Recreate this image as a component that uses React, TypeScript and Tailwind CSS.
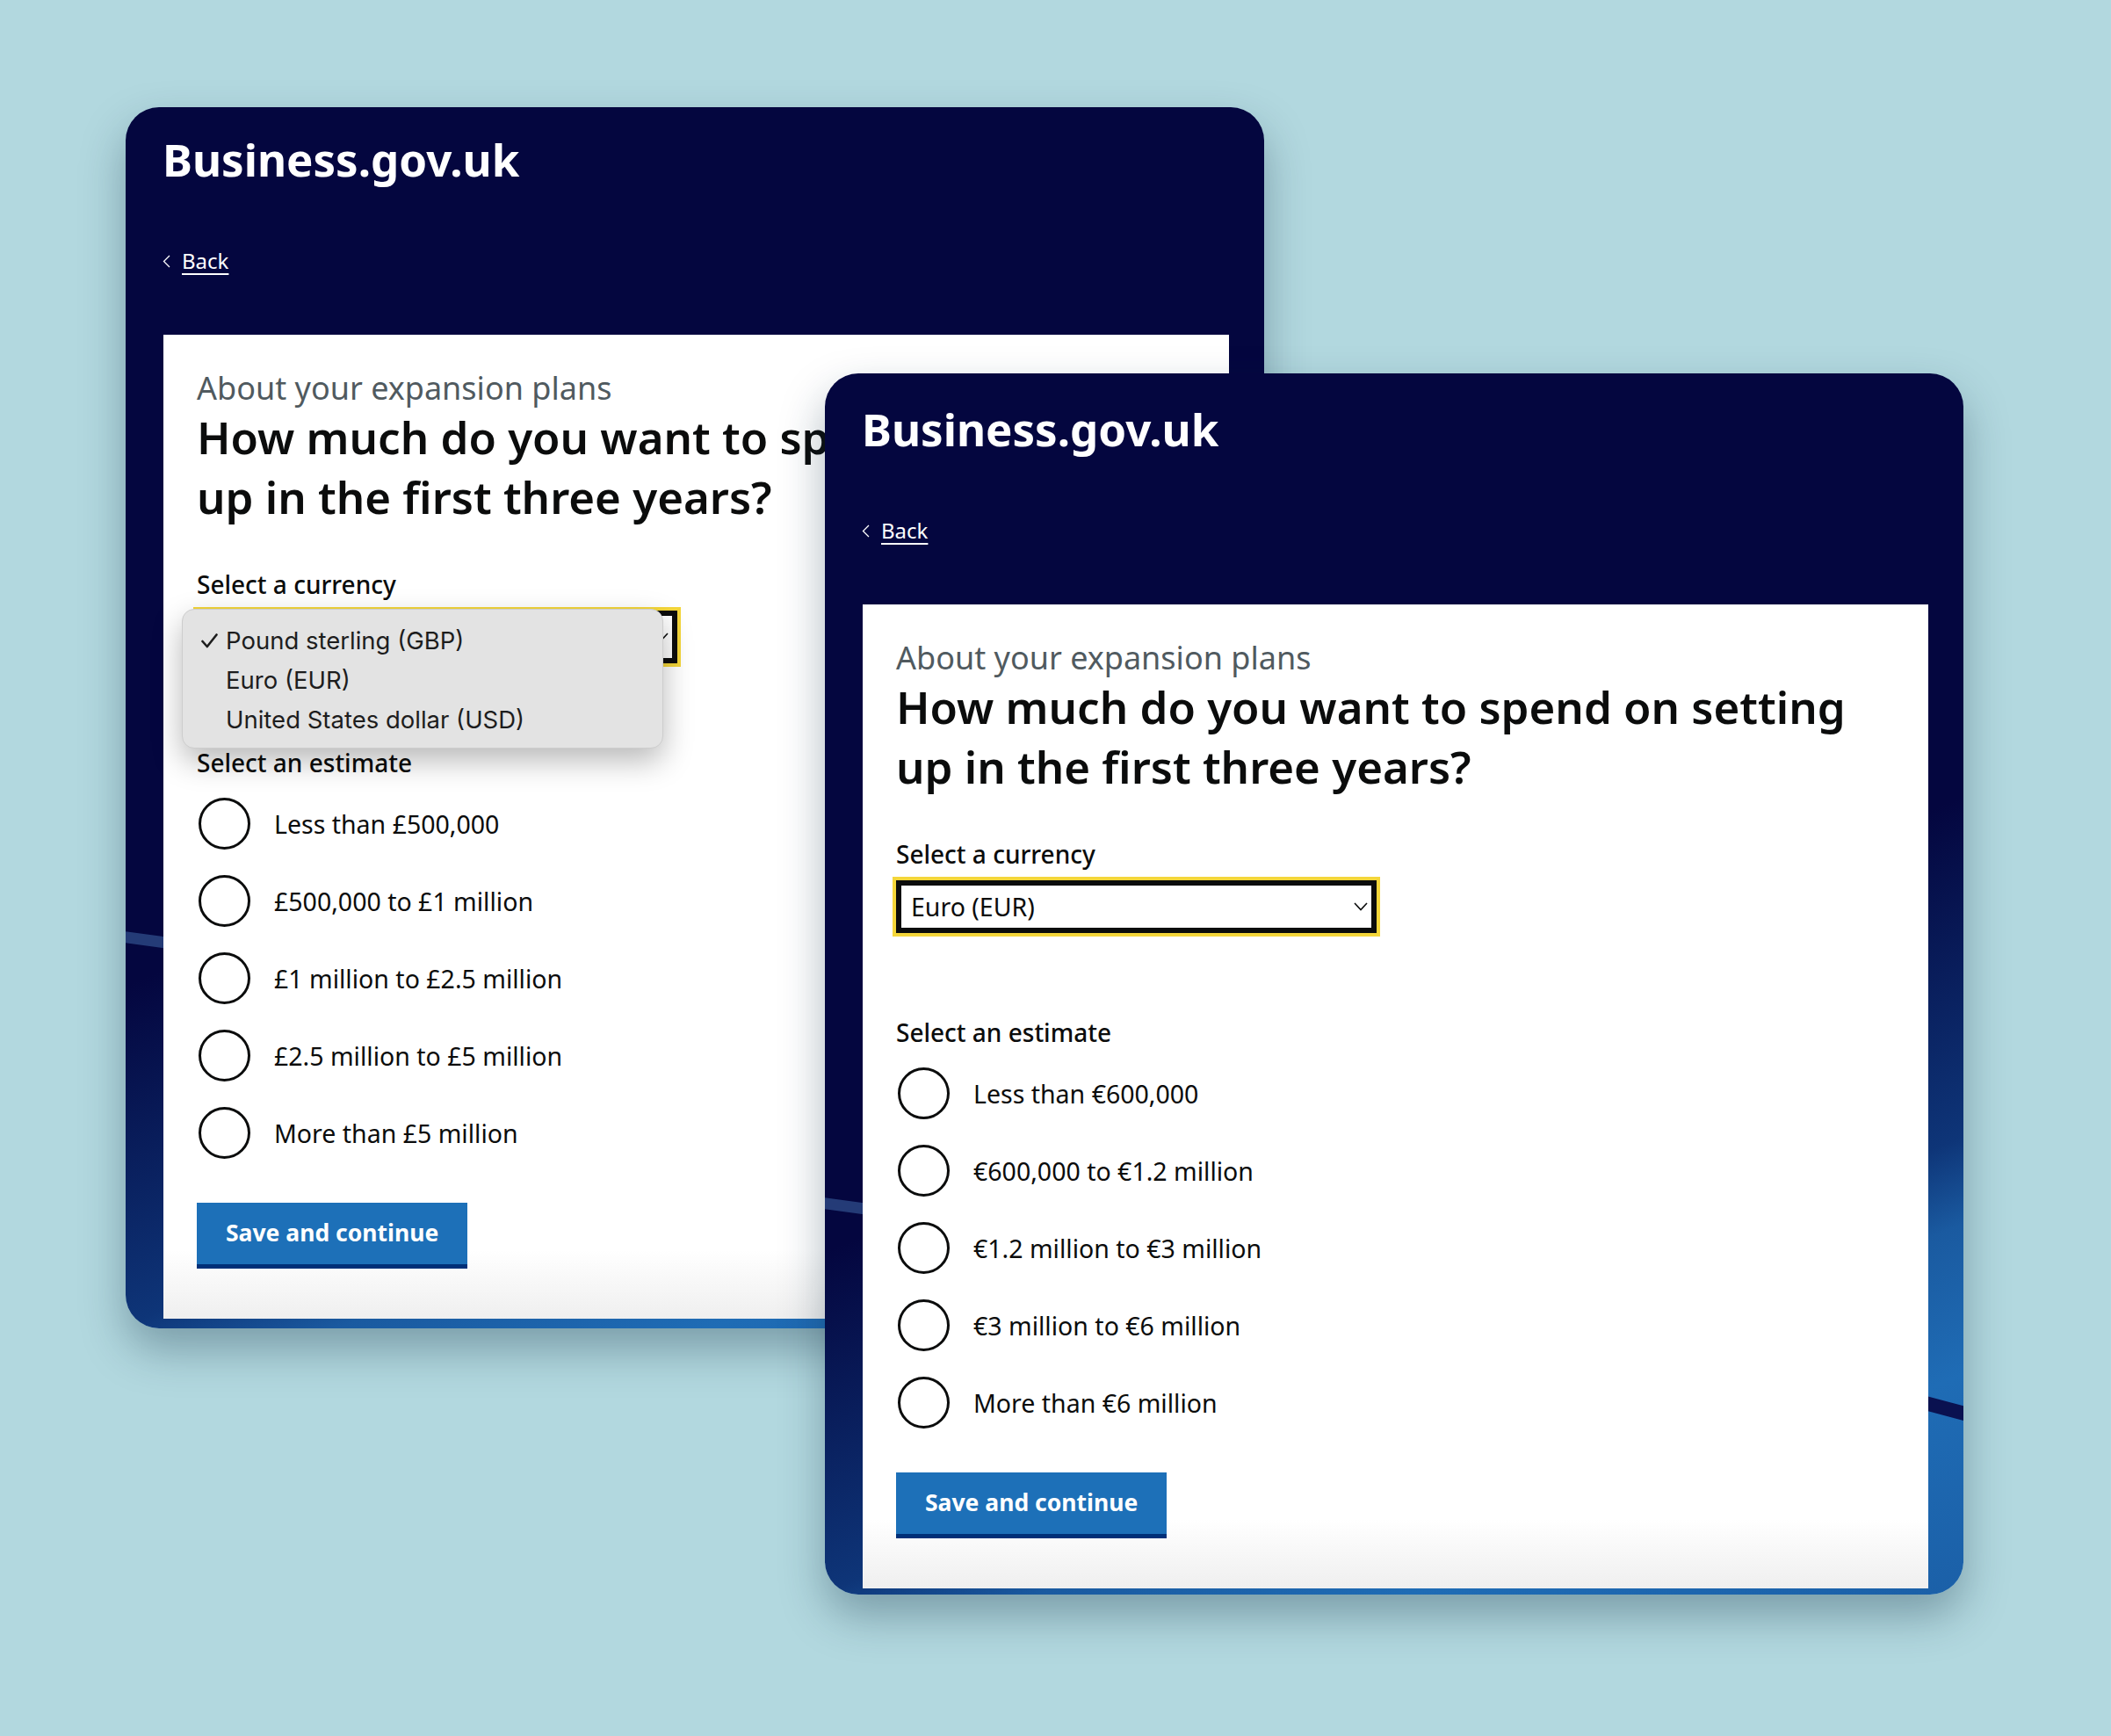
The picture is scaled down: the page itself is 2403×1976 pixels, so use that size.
import React from "react"

type CardProps = {
  pos: string
  headPad: string
  gradId: string
  selected: string
  options: string[]
  menuOpen?: boolean
}

const sans = "font-['Noto_Sans',sans-serif]"

function Backdrop({ id }: { id: string }) {
  return (
    <svg
      className="absolute inset-0 w-full h-full"
      viewBox="0 0 1296 1390"
      preserveAspectRatio="none"
    >
      <defs>
        <linearGradient id={id} gradientUnits="userSpaceOnUse" x1="345" y1="862" x2="655" y2="1638">
          <stop offset="0" stopColor="#04063f" />
          <stop offset="0.43" stopColor="#0e3578" />
          <stop offset="0.54" stopColor="#1a5aa0" />
          <stop offset="0.73" stopColor="#1f6cb5" />
          <stop offset="1" stopColor="#1b60a8" />
        </linearGradient>
      </defs>
      <rect width="1296" height="1390" fill={`url(#${id})`} />
      {/* light swoosh on the left edge */}
      <path d="M-20 942 L200 972" stroke="#3a5f9c" strokeOpacity="0.6" strokeWidth="13" fill="none" />
      {/* dark swoosh on the right edge */}
      <path d="M1200 1158 L1320 1190" stroke="#0a1150" strokeWidth="16" fill="none" />
    </svg>
  )
}

function Radio({ label }: { label: string }) {
  return (
    <div className="flex items-center gap-[27px] pl-[2px]">
      <span className="w-[59px] h-[59px] rounded-full border-[3px] border-[#0b0c0c] bg-white shrink-0" />
      <span className="text-[28.5px] leading-[32px] text-[#0b0c0c]">{label}</span>
    </div>
  )
}

function CurrencyMenu() {
  const items = ["Pound sterling (GBP)", "Euro (EUR)", "United States dollar (USD)"]
  return (
    <div className="absolute left-[21px] top-[312px] w-[548px] h-[159px] rounded-[14px] bg-[#e3e3e3] border border-[#cdcdcd] shadow-[0_14px_34px_rgba(0,0,0,0.28)] pt-[13px] font-['Inter',sans-serif] text-[27.5px] leading-[45px] text-[#1d1d1d]">
      {items.map((item, idx) => (
        <div key={item} className="flex items-center pl-[21px]">
          <span className="w-[28px] flex items-center">
            {idx === 0 && (
              <svg width="19" height="17" viewBox="0 0 19 17" fill="none">
                <path d="M1.5 9 L6.8 15 L17.5 1.5" stroke="#1d1d1d" strokeWidth="2.6" strokeLinecap="round" strokeLinejoin="round" />
              </svg>
            )}
          </span>
          <span>{item}</span>
        </div>
      ))}
    </div>
  )
}

function Card({ pos, headPad, gradId, selected, options, menuOpen }: CardProps) {
  return (
    <div className={`absolute ${pos} w-[1296px] h-[1390px] rounded-[38px] overflow-hidden shadow-[0_24px_50px_rgba(20,50,70,0.35)] ${sans}`}>
      <Backdrop id={gradId} />
      <div className="relative flex flex-col h-full">
        {/* header */}
        <div className={`pl-[42px] ${headPad}`}>
          <div className="text-[51px] leading-[56px] font-bold text-white">Business.gov.uk</div>
          <a className="mt-[74px] flex items-center gap-[13px] text-[24px] leading-[28px] text-white">
            <svg width="9" height="15" viewBox="0 0 9 15" fill="none">
              <path d="M8 1 L1.5 7.5 L8 14" stroke="white" strokeWidth="1.3" />
            </svg>
            <span className="underline underline-offset-[5px] decoration-2">Back</span>
          </a>
        </div>

        {/* form panel */}
        <div className="relative ml-[43px] mt-[70px] w-[1213px] h-[1120px] bg-[linear-gradient(to_bottom,#ffffff_93%,#efefef)] pl-[38px] pt-[41px]">
          <p className="text-[36px] leading-[40px] text-[#505a5f]">About your expansion plans</p>
          <h1 className="mt-[1px] text-[51px] leading-[68px] font-semibold text-[#0b0c0c]">
            How much do you want to spend on setting
            <br />
            up in the first three years?
          </h1>

          <div className="mt-[50px] text-[28px] leading-[32px] font-medium text-[#0b0c0c]">Select a currency</div>
          <div className="mt-[14px] w-[547px] h-[60px] border-[6px] border-[#0b0c0c] outline-4 outline-[#f4d63a] bg-white flex items-center justify-between pl-[11px] pr-[4px]">
            <span className="text-[28.5px] leading-[32px] text-[#0b0c0c]">{selected}</span>
            <svg width="16" height="10" viewBox="0 0 16 10" fill="none">
              <path d="M1 1 L8 8.5 L15 1" stroke="#0b0c0c" strokeWidth="1.6" />
            </svg>
          </div>

          <div className="mt-[97px] text-[28px] leading-[32px] font-medium text-[#0b0c0c]">Select an estimate</div>
          <div className="mt-[24px] flex flex-col gap-[29px]">
            {options.map((o) => (
              <Radio key={o} label={o} />
            ))}
          </div>

          <button className="mt-[50px] h-[75px] px-[33px] bg-[#1d70b8] border-b-[5px] border-[#003078] text-white text-[26.5px] font-bold flex items-center">
            Save and continue
          </button>

          {menuOpen && <CurrencyMenu />}
        </div>
      </div>
    </div>
  )
}

export default function App() {
  const gbp = [
    "Less than £500,000",
    "£500,000 to £1 million",
    "£1 million to £2.5 million",
    "£2.5 million to £5 million",
    "More than £5 million",
  ]
  const eur = [
    "Less than €600,000",
    "€600,000 to €1.2 million",
    "€1.2 million to €3 million",
    "€3 million to €6 million",
    "More than €6 million",
  ]

  return (
    <div className="relative w-[2403px] h-[1976px] bg-[#b2d8df] overflow-hidden">
      <Card
        pos="left-[143px] top-[122px]"
        headPad="pt-[31px]"
        gradId="bgLeft"
        selected="Pound sterling (GBP)"
        options={gbp}
        menuOpen
      />
      <Card
        pos="left-[939px] top-[425px]"
        headPad="pt-[35px]"
        gradId="bgRight"
        selected="Euro (EUR)"
        options={eur}
      />
    </div>
  )
}
